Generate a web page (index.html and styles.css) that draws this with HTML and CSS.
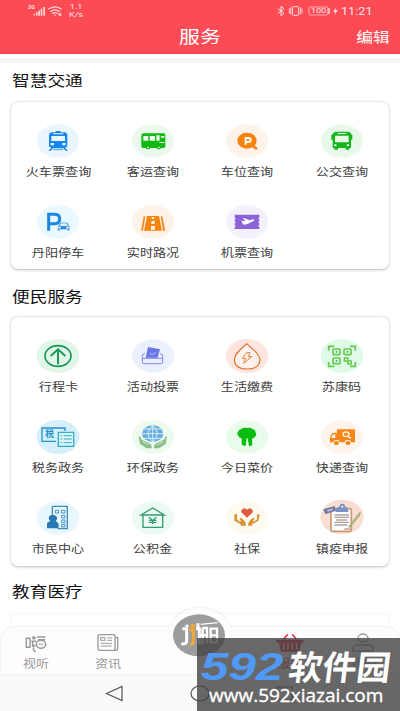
FILE: index.html
```html
<!DOCTYPE html>
<html lang="zh-CN">
<head>
<meta charset="utf-8">
<title>服务</title>
<link rel="stylesheet" href="styles.css">
</head>
<body>
<div class="screen">
  <header class="header">
    <div class="status">
      <svg class="signal" viewBox="0 0 108 36">
        <g fill="#ffd9dc"><rect x="20" y="26" width="4" height="6"/><rect x="27" y="22" width="5" height="10"/><rect x="34" y="17" width="5" height="15"/><rect x="41" y="11" width="5" height="21"/><rect x="49" y="6" width="5" height="26"/></g>
        <g fill="none" stroke="#ffd9dc" stroke-width="4"><path d="M64 13Q84-2 104 13M70 20Q84 9 98 20M76 26Q84 20 92 26"/></g>
        <path d="M80 29h8l-4 4zM95 25h8v7h-8z" fill="#ffd9dc"/>
      </svg>
      <span class="gen">2G</span>
      <span class="rate">1.1<br>K/s</span>
      <svg class="device" viewBox="0 0 186 36">
        <g fill="none" stroke="#ffe3e5" stroke-width="3"><path d="M3 11l18 14-9 7V4l9 7L3 25"/><rect x="46" y="5" width="19" height="26" rx="3"/><path d="M37 10v16M41 7v22M70 7v22M75 10v16" stroke-width="2.5"/><rect x="96" y="6" width="56" height="24" rx="4" stroke-width="2"/><path d="M156 9v18" stroke-width="4"/></g>
        <path d="M178 7l-10 13h7l-3 10 11-14h-8z" fill="#ffe3e5"/>
      </svg>
      <span class="battery">100</span>
      <span class="clock">11:21</span>
    </div>
    <div class="titlebar"><h1 class="title">服务</h1><span class="edit">编辑</span></div>
  </header>
  <div class="strip"></div>

  <main class="content">
    <h2 class="heading"><span>智慧交通</span></h2>
    <section class="card traffic">
      <div class="item"><svg class="icon" viewBox="0 0 126 102"><ellipse cx="63" cy="51" rx="63" ry="50" fill="#eaf5fe"/><path fill="#1787ee" fill-rule="evenodd" d="M43 25h13v-4h15v4h13q7 1 7 9v31q0 5-7 6l9 9h-7l-7-7H48l-7 7h-7l9-9q-7-1-7-6V34q0-8 7-9zM43 36v15h41V36zM41 57h10v7H41zM76 57h10v7H76zM48 28v3h31v-3z"/><path d="M49 77h29" stroke="#4ca4f3" stroke-width="3"/></svg><span class="label">火车票查询</span></div>
      <div class="item"><svg class="icon" viewBox="0 0 126 102"><ellipse cx="63" cy="51" rx="63" ry="50" fill="#ebfaed"/><path fill="#10b811" fill-rule="evenodd" d="M34 28h62q4 0 4 5v34q0 5-5 5h-8a8 7 0 0 1-14 0H55a8 7 0 0 1-14 0h-8q-5 0-5-5V36q0-8 6-8zM34 36v14h15V36zM53 36v14h16V36zM73 34v16h10V34zM87 36v5h10v-5zM82 54h15v3H82z"/><g fill="#fff"><ellipse cx="48" cy="70" rx="3" ry="2"/><ellipse cx="80" cy="70" rx="3" ry="2"/></g></svg><span class="label">客运查询</span></div>
      <div class="item"><svg class="icon" viewBox="0 0 126 102"><ellipse cx="63" cy="51" rx="63" ry="50" fill="#fef3e9"/><ellipse cx="63" cy="50" rx="29" ry="24" fill="#f98211"/><path d="M80 66l13 9" stroke="#f98211" stroke-width="8"/><path d="M59 62V42h8q7 0 7 6t-7 6h-8" fill="none" stroke="#fff" stroke-width="6"/></svg><span class="label">车位查询</span></div>
      <div class="item"><svg class="icon" viewBox="0 0 126 102"><ellipse cx="63" cy="51" rx="63" ry="50" fill="#e8f9ea"/><path fill="#14b51c" fill-rule="evenodd" d="M44 23h38q8 1 10 9h2v15h-4v25h-5v5H74v-5H51v5H40v-5h-5V47h-4V32h3q2-8 10-9zM42 35v20h41V35zM50 27v3h26v-3z"/><g fill="#fff"><ellipse cx="43" cy="64" rx="4" ry="3"/><ellipse cx="81" cy="64" rx="4" ry="3"/></g></svg><span class="label">公交查询</span></div>
      <div class="item"><svg class="icon" viewBox="0 0 126 102"><ellipse cx="63" cy="51" rx="63" ry="50" fill="#eaf8ff"/><path d="M35 77V28h18q15 0 15 14t-15 14H35" fill="none" stroke="#1b86e4" stroke-width="9"/><path fill="#2788df" stroke="#eaf8ff" stroke-width="2" fill-rule="evenodd" d="M63 63l5-8q2-3 6-3h13q4 0 6 3l4 8q1 1 1 4v10h-7v-3H69v3h-7V67zM69 62h23l-4-6H73zM65 66v4h5v-4zM89 66v4h5v-4z"/></svg><span class="label">丹阳停车</span></div>
      <div class="item"><svg class="icon" viewBox="0 0 126 102"><ellipse cx="63" cy="51" rx="63" ry="50" fill="#fef2e9"/><path d="M40 34h-5L27 77h6zM86 34h5l9 43h-7z" fill="#f68b28"/><path fill="#f6850f" fill-rule="evenodd" d="M45 33h36l9 44H36zM59 36v6h7v-6zM58 48v9h10v-9zM57 63v11h12V63z"/></svg><span class="label">实时路况</span></div>
      <div class="item"><svg class="icon" viewBox="0 0 126 102"><ellipse cx="63" cy="51" rx="63" ry="50" fill="#f4f1fd"/><path fill="#8b64d8" d="M26 29h74v9l-4 3 4 3v5l-4 3 4 3v5l-4 3 4 3v6H26v-6l4-3-4-3v-5l4-3-4-3v-5l4-3-4-3z"/><path fill="#fff" d="M46 45l5 4 8-1-9-8h6l15 6 11-3q4 0 2 4L66 56q-13 5-16 1z"/></svg><span class="label">机票查询</span></div>
    </section>

    <h2 class="heading second"><span>便民服务</span></h2>
    <section class="card civic">
      <div class="item"><svg class="icon" viewBox="0 0 126 102"><ellipse cx="63" cy="51" rx="64" ry="51" fill="#e2f5e9"/><ellipse cx="63" cy="51" rx="39" ry="31" fill="none" stroke="#1b9a57" stroke-width="5"/><path d="M63 76V32M41 51l22-20 22 20" fill="none" stroke="#1b9a57" stroke-width="6"/></svg><span class="label">行程卡</span></div>
      <div class="item"><svg class="icon" viewBox="0 0 126 102"><ellipse cx="63" cy="51" rx="63" ry="50" fill="#eaf1fd"/><path d="M39 44q-8 0-8 7v19q0 4 5 4h51q5 0 5-4V51q0-7-8-7M31 58h61" fill="none" stroke="#7f86ed" stroke-width="3"/><path fill="#6876e6" d="M48 24l36 7-7 25H41z"/><path d="M53 43l8 4 12-7" fill="none" stroke="#bdc7ff" stroke-width="2.5"/></svg><span class="label">活动投票</span></div>
      <div class="item"><svg class="icon" viewBox="0 0 126 102"><ellipse cx="63" cy="51" rx="64" ry="51" fill="#fce5df"/><path d="M62 14C48 29 25 42 25 63q2 27 38 27t39-27C101 42 76 29 62 14z" fill="#fff2ec" stroke="#dc7432" stroke-width="3.5"/><path d="M62 41L49 58h10l-6 15 24-20H67l5-12z" fill="none" stroke="#e18137" stroke-width="3"/></svg><span class="label">生活缴费</span></div>
      <div class="item"><svg class="icon" viewBox="0 0 126 102"><ellipse cx="63" cy="51" rx="64" ry="51" fill="#e0faea"/><g fill="none" stroke="#66c84c" stroke-width="5"><path d="M23 35V22h17M87 22h16v13M23 69v13h17M87 82h16V69"/><rect x="36" y="30" width="21" height="17" rx="3"/><rect x="69" y="30" width="21" height="17" rx="3"/><rect x="36" y="57" width="21" height="17" rx="3"/><path d="M70 57h11v9H70zM81 66h10v9H81z" stroke-width="4"/></g><g fill="#35b76c"><path d="M44 36h5v5h-5zM77 36h5v5h-5zM44 63h5v5h-5z"/></g></svg><span class="label">苏康码</span></div>
      <div class="item"><svg class="icon" viewBox="0 0 126 102"><ellipse cx="63" cy="51" rx="64" ry="51" fill="#d5f0fb"/><path d="M84 33V24H15v40h42" fill="none" stroke="#2790c9" stroke-width="4"/><text class="tax" x="25" y="52">税</text><path d="M64 37h46v42H64z" fill="#d7f5fa" stroke="#39abc4" stroke-width="4"/><path d="M70 47h5M80 47h24M70 57h5M80 57h24M70 68h5M80 68h24" stroke="#39abc4" stroke-width="3"/></svg><span class="label">税务政务</span></div>
      <div class="item"><svg class="icon" viewBox="0 0 126 102"><ellipse cx="63" cy="51" rx="63" ry="50" fill="#edfbee"/><ellipse cx="62" cy="41" rx="32" ry="25" fill="#69aede"/><path d="M30 41h64M36 27h52M36 55h52M62 16v50M62 16q-28 25 0 50M62 16q28 25 0 50" fill="none" stroke="#e8f8ff" stroke-width="2.5"/><path fill="#8dbd8b" d="M20 49q5-2 9 10l20 9q12 5 10 17H44L24 72zM105 49q-5-2-9 10l-20 9q-12 5-10 17h15l20-13z"/><path d="M32 65l18 9M93 65l-18 9" stroke="#edfbee" stroke-width="2"/></svg><span class="label">环保政务</span></div>
      <div class="item"><svg class="icon" viewBox="0 0 126 102"><ellipse cx="63" cy="51" rx="63" ry="50" fill="#e9fbeb"/><path fill="#09bd0f" d="M46 27q7-6 17-3 10-3 17 3 9 2 8 9 6 8-1 14-4 6-9 5l1 19q-2 4-10 4l-4-23h-3l-3 23q-8 0-12-5V55q-7 0-9-7-7-6-2-12 2-8 10-9z"/></svg><span class="label">今日菜价</span></div>
      <div class="item"><svg class="icon" viewBox="0 0 126 102"><ellipse cx="63" cy="51" rx="63" ry="50" fill="#fef4eb"/><path fill="#f68617" fill-rule="evenodd" d="M48 28h54v39H91q-2-8-11-7-9 0-9 7H57q-2-7-11-7-8 0-10 7h-9V53q3-15 14-15h7zM32 49v5h11V43q-7-1-11 6z"/><g fill="#f68617"><ellipse cx="46" cy="69" rx="8" ry="6"/><ellipse cx="81" cy="69" rx="8" ry="6"/></g><ellipse cx="75" cy="43" rx="9" ry="7" fill="none" stroke="#fff0df" stroke-width="4"/><path d="M81 49l9 6" stroke="#fff0df" stroke-width="4"/></svg><span class="label">快递查询</span></div>
      <div class="item"><svg class="icon" viewBox="0 0 126 102"><ellipse cx="63" cy="51" rx="64" ry="50" fill="#e8f6fd"/><path d="M46 16h45v67H62M46 16v25" fill="none" stroke="#408eb9" stroke-width="4"/><g fill="none" stroke="#4697c8" stroke-width="3"><path d="M55 28h10v8H55zM74 28h10v8H74zM74 43h10v8H74zM74 57h10v8H74zM74 70h10v8H74z"/></g><path fill="#2878b4" d="M30 82V70q0-7 10-9-10-13 1-18 8-4 16 2 7 7-1 16 9 3 9 12v9z"/></svg><span class="label">市民中心</span></div>
      <div class="item"><svg class="icon" viewBox="0 0 126 102"><ellipse cx="63" cy="51" rx="63" ry="50" fill="#ecfaf4"/><path d="M27 42l35-21 35 21H27zM33 42v37h59V42" fill="none" stroke="#339b70" stroke-width="4"/><path d="M51 49l11 10 11-10M62 59v10M51 58h22M51 64h22" fill="none" stroke="#339b70" stroke-width="4"/></svg><span class="label">公积金</span></div>
      <div class="item"><svg class="icon" viewBox="0 0 126 102"><ellipse cx="63" cy="51" rx="63" ry="50" fill="#fefaf0"/><path fill="#df5942" d="M63 50L46 34q-2-7 5-11 8-3 12 4 5-7 12-4 8 4 4 12z"/><path fill="#d99535" d="M25 42q3-5 8-2v15l9 7 3-2-5-6q4-6 9-1l7 8q4 4 4 13H44V70L25 59zM101 42q-3-5-8-2v15l-9 7-3-2 5-6q-4-6-9-1l-7 8q-4 4-4 13h12v-4l19-11z"/></svg><span class="label">社保</span></div>
      <div class="item"><svg class="icon" viewBox="0 0 126 102"><ellipse cx="63" cy="48" rx="65" ry="52" fill="#f8dfd1"/><rect x="30" y="23" width="61" height="68" rx="4" fill="#fff" stroke="#c79a75" stroke-width="5"/><path fill="#7c91c5" d="M43 30q1-12 12-12 0-10 9-10 9 1 9 10 9 0 9 12v3H43z"/><ellipse cx="64" cy="17" rx="3" ry="2.5" fill="#fff"/><path d="M40 42h44M40 49h44M40 64h44M40 72h40" stroke="#a5a5a5" stroke-width="4"/><path d="M45 57h34M70 84h18" stroke="#b96a63" stroke-width="3"/><path fill="#7078a0" d="M7 25l34-10 3 14-31 11z"/><path fill="#b9c1e0" d="M18 27l17-5 1 5-16 5z"/><path d="M83 78l27-37 8-7-3 11-29 34z" fill="#d8c18e" stroke="#8aa268" stroke-width="2.5"/></svg><span class="label">镇疫申报</span></div>
    </section>

    <h2 class="heading third"><span>教育医疗</span></h2>
    <section class="card partial"></section>
  </main>

  <nav class="tabs">
    <div class="tab"><svg viewBox="0 0 66 60"><g fill="none" stroke="#999" stroke-width="4.5"><path d="M4 16h11v27H4zM21 15h13M26 8v12M19 25h14M23 25v15q5 0 8-4M27 43q-6 8 5 14M36 12h26M39 20h22"/><ellipse cx="48" cy="34" rx="14" ry="12"/><path d="M41 36l4-5 5 6 5-6" stroke-width="3"/></g></svg><span class="tablabel">视听</span></div>
    <div class="tab"><svg viewBox="0 0 66 60"><g fill="none" stroke="#9b9b9b" stroke-width="4"><path d="M8 5h43q3 0 3 4v38q0 5 5 5H8q-5 0-5-5V9q0-4 5-4zM55 13h7v34q0 5-5 5"/><rect x="11" y="14" width="13" height="8" stroke-width="3"/><path d="M31 15h14M31 22h14M11 31h34M11 39h34" stroke-width="3"/></g></svg><span class="tablabel">资讯</span></div>
    <div class="tab middle"></div>
    <div class="tab active"><svg viewBox="0 0 84 60"><path fill="#e53641" fill-rule="evenodd" d="M1 20h82v8h-6l-8 28H15L8 28H1zM21 30v20h4V30zM34 30v20h4V30zM47 30v20h4V30zM60 30v20h4V30z"/><path d="M23 19L35 4M61 19L49 4" stroke="#e53641" stroke-width="5"/></svg><span class="tablabel">服务</span></div>
    <div class="tab"><svg viewBox="0 0 66 60"><g fill="none" stroke="#999" stroke-width="4"><ellipse cx="33" cy="15" rx="15" ry="12"/><path d="M3 54V46q0-9 11-10h38q11 1 11 10v8z"/></g></svg><span class="tablabel">我的</span></div>
    <div class="logo">
      <svg viewBox="0 0 192 156"><ellipse cx="93" cy="82" rx="78" ry="63" fill="#9c9c9c"/><g fill="none" stroke="#fff" stroke-width="9"><path d="M43 62h13v37q0 9-16 9M57 57v-7"/><path d="M84 62h10v47M90 46v16M94 82h8"/><path d="M103 60h14v46M104 60v49M104 82h13M128 62h19v41h-19zM128 82h19" stroke-width="7"/><path d="M98 49l51-5" stroke-width="4"/></g><path d="M64 66h12v37q0 6-10 6" fill="none" stroke="#f2aa38" stroke-width="9"/><ellipse cx="75" cy="53" rx="8" ry="6" fill="#f2aa38"/></svg>
    </div>
  </nav>
  <div class="system">
    <svg viewBox="0 0 400 37"><g fill="none" stroke="#555" stroke-width="1.2"><path d="M122 11.5v14L106.5 18.5z"/><ellipse cx="200" cy="18.5" rx="9" ry="7.5"/><path d="M277 12h15v13h-15z"/></g></svg>
  </div>
  <aside class="mark">
    <div class="brand"><span class="digits">592</span><span class="words">软件园</span></div>
    <div class="site">www.592xiazai.com</div>
  </aside>
</div>
</body>
</html>
```
FILE: styles.css
```css
* { box-sizing: border-box; }
body { margin: 0; font-family: "Liberation Sans", "Noto Sans CJK SC", sans-serif; }
.screen { position: relative; width: 400px; height: 711px; overflow: hidden; background: #fff; display: flex; flex-direction: column; }
svg { display: block; overflow: visible; flex: none; }

.header { height: 54px; flex: none; background: #fc4b55; color: #fff; }
.status { position: relative; height: 22px; color: #ffe3e5; font-family: Roboto, sans-serif; }
.signal { position: absolute; left: 27px; top: 5px; width: 36px; height: 12px; }
.gen { position: absolute; left: 28px; top: 4px; font-size: 5.5px; line-height: 7px; font-weight: 700; }
.rate { position: absolute; left: 66px; width: 20px; top: 3px; font-size: 7.5px; line-height: 8px; text-align: center; transform: scaleX(1.2); }
.device { position: absolute; left: 277px; top: 5px; width: 62px; height: 12px; }
.battery { position: absolute; left: 310px; width: 17px; top: 6px; font-size: 8px; line-height: 10px; text-align: center; transform: scaleX(1.15); }
.clock { position: absolute; left: 341px; top: 4px; font-size: 11.5px; line-height: 14px; transform: scaleX(1.1); transform-origin: left; white-space: nowrap; }
.titlebar { position: relative; height: 32px; display: flex; justify-content: center; align-items: center; }
.title { margin: 0; font-size: 17px; line-height: 30px; font-weight: 400; transform: scaleX(1.23); }
.edit { position: absolute; right: 13px; top: 0; font-size: 14px; line-height: 31px; transform: scaleX(1.2); }
.strip { height: 5px; margin-top: 4px; flex: none; background: #f5f6f7; }

.content { flex: none; height: 564px; padding: 5.5px 11px 0 11px; overflow: hidden; }
.heading { margin: 0; height: 24px; font-size: 14.5px; line-height: 24px; font-weight: 400; color: #111; padding-left: 0.5px; }
.heading span { display: inline-block; transform: scaleX(1.22); transform-origin: left; }
.card { display: grid; grid-template-columns: repeat(4, 1fr); grid-auto-rows: 81px; margin-top: 9px; border-radius: 7px; background: #fff; box-shadow: 0 0.5px 2.5px rgba(0,0,0,.27); }
.traffic { height: 167.5px; padding-top: 22.5px; }
.second { margin-top: 15.5px; }
.civic { height: 249px; margin-top: 8.5px; padding-top: 22px; }
.third { margin-top: 14px; }
.partial { height: 80px; margin-top: 10px; box-shadow: 0 0 2px rgba(0,0,0,.12); }
.item { display: flex; flex-direction: column; align-items: center; }
.icon { width: 42px; height: 34px; }
.label { margin-top: 5.5px; font-size: 11px; line-height: 16px; color: #3d3d3d; white-space: nowrap; transform: scaleX(1.19); }
.tax { font-family: "Noto Sans CJK SC", sans-serif; font-size: 26px; font-weight: 700; fill: #2790c9; }

.tabs { position: absolute; left: 1px; right: 1px; top: 626.5px; height: 48px; display: grid; grid-template-columns: 69px 76px 108px 72px 1fr; background: #fdfdfd; border-radius: 13px 13px 0 0; box-shadow: 0 0 2px rgba(0,0,0,.16); }
.tab { display: flex; flex-direction: column; align-items: center; padding-top: 6.5px; color: #999; }
.tab svg { height: 20px; width: 22px; }
.tab.active svg { width: 28px; }
.tab.active { color: #e53641; }
.tablabel { margin-top: 4px; font-size: 11px; line-height: 15px; transform: scaleX(1.19); }
.logo { position: absolute; left: 167px; top: -19px; width: 64px; height: 52px; border-radius: 50%; background: #fdfdfd; box-shadow: 0 -1px 2px rgba(0,0,0,.07); }
.logo svg { width: 64px; height: 52px; }
.system { position: absolute; left: 0; right: 0; top: 674px; height: 37px; background: #fafafa; border-top: 1px solid #f3f3f3; }
.system svg { width: 400px; height: 37px; }

.mark { position: absolute; left: 197px; top: 638px; width: 203px; height: 73px; background: rgba(66,66,66,.8); color: #fff; }
.brand { display: flex; height: 45px; padding: 9px 0 0 4px; white-space: nowrap; }
.digits { width: 88px; font: italic 700 38px/41px "Liberation Sans", sans-serif; color: #509af5; transform: scaleX(1.3); transform-origin: left; }
.words { font: 700 34px/38px "Noto Sans CJK SC", sans-serif; transform: skewX(-7deg); }
.site { padding-left: 12px; height: 24px; font: 17.5px/24px "Open Sans", "Noto Sans", sans-serif; -webkit-text-stroke: 0.35px #fff; white-space: nowrap; transform: scaleX(1.085); transform-origin: 12px 0; }
```
